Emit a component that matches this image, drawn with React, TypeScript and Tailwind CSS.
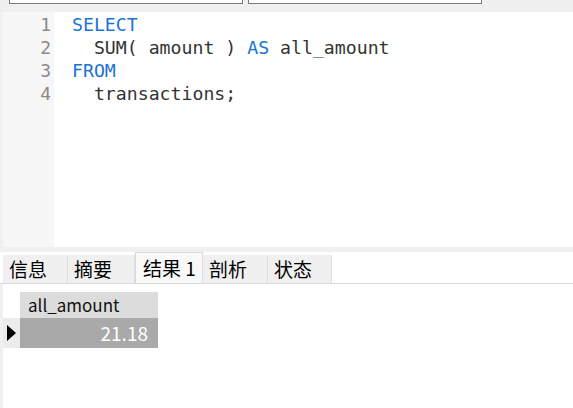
import React from 'react';

const mono = { fontFamily: '"DejaVu Sans Mono", "Liberation Mono", monospace' };
const ui = { fontFamily: '"Noto Sans CJK SC", "Liberation Sans", sans-serif' };

const lines: { n: number; parts: { t: string; kw?: boolean }[] }[] = [
  { n: 1, parts: [{ t: 'SELECT', kw: true }] },
  { n: 2, parts: [{ t: '  SUM( amount ) ' }, { t: 'AS', kw: true }, { t: ' all_amount' }] },
  { n: 3, parts: [{ t: 'FROM', kw: true }] },
  { n: 4, parts: [{ t: '  transactions;' }] },
];

const tabs = [
  { t: '信息', w: 'w-[65px]' },
  { t: '摘要', w: 'w-[67px]' },
  { t: '结果 1', w: 'w-[68px]' },
  { t: '剖析', w: 'w-[65px]' },
  { t: '状态', w: 'w-[64px]' },
];

const App: React.FC = () => {
  return (
    <div className="w-[573px] h-[408px] bg-[#f0f0f0] flex flex-col overflow-hidden">
      {/* query boxes, cut off at top */}
      <div className="h-[12px] flex items-start gap-[5px] pl-[9px]">
        <div className="w-[234px] h-[4px] bg-white border-x border-b border-[#7a7a7a]" />
        <div className="w-[234px] h-[4px] bg-white border-x border-b border-[#7a7a7a]" />
      </div>

      {/* editor */}
      <div className="h-[235px] flex pl-[3px]">
        <div className="w-[51px] bg-[#f7f7f7] pt-[1px] text-right pr-[3px] text-[18px] leading-[23px] text-[#8a8a8a]" style={mono}>
          {lines.map((l) => (
            <div key={l.n}>{l.n}</div>
          ))}
        </div>
        <div className="flex-1 bg-white pt-[1px] pl-[18px] text-[18.2px] leading-[23px] text-[#333] whitespace-pre" style={mono}>
          {lines.map((l) => (
            <div key={l.n}>
              {l.parts.map((p, i) => (
                <span key={i} className={p.kw ? 'text-[#1a74d2]' : ''}>{p.t}</span>
              ))}
            </div>
          ))}
        </div>
      </div>

      <div className="h-[5px]" />

      {/* tabs */}
      <div className="h-[32px] flex pl-[3px] bg-white border-b border-[#d9d9d9]">
        {tabs.map(({ t, w }) => {
          const active = t === '结果 1';
          return (
            <div
              key={t}
              className={
                active
                  ? `${w} h-[31px] -mb-[1px] bg-[#f9f9f9] border-x border-t border-[#dcdcdc] flex items-center pl-[7px] text-[19px] text-black`
                  : `${w} h-[28px] mt-[3px] bg-[#f0f0f0] border-r border-[#dcdcdc] flex items-center pl-[6px] text-[19px] text-black`
              }
              style={ui}
            >
              {t}
            </div>
          );
        })}
      </div>

      {/* result grid */}
      <div className="flex-1 flex pl-[3px]">
        <div className="flex-1 bg-white pt-[8px]">
          <div className="flex">
            <div className="w-[17px]" />
            <div className="w-[138px] h-[26px] bg-[#dcdcdc] pl-[8px] flex items-center text-[17px] text-[#111]" style={ui}>
              all_amount
            </div>
          </div>
          <div className="flex">
            <div className="w-[17px] h-[30px] bg-[#ececec] flex items-center pl-[4px]">
              <svg width="9" height="16" viewBox="0 0 9 16">
                <path d="M0 0 L9 8 L0 16 Z" fill="#000" />
              </svg>
            </div>
            <div className="w-[138px] h-[30px] bg-[#a9a9a9] pr-[10px] flex items-center justify-end text-[19px] text-white" style={ui}>
              21.18
            </div>
          </div>
        </div>
      </div>
    </div>
  );
};

export default App;
